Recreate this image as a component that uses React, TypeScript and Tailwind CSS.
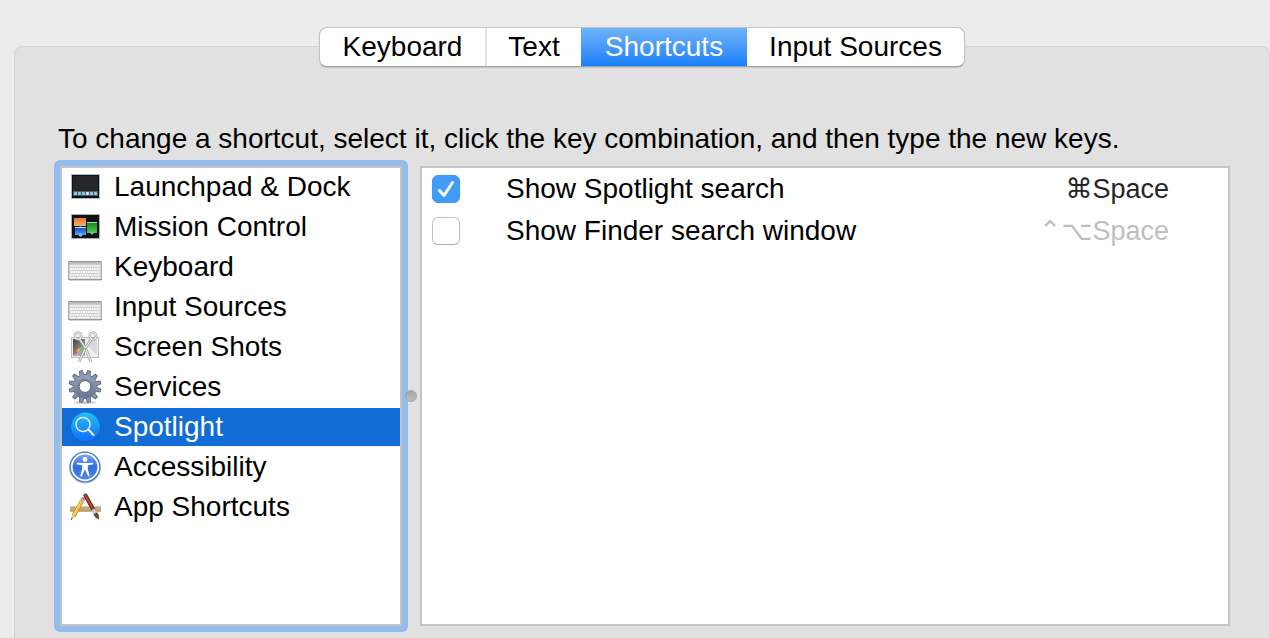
import { useState } from "react";
import type { ReactNode } from "react";

function LaunchpadIcon() {
  return (
    <svg viewBox="0 1 34 36" className="h-9 w-[34px] shrink-0" aria-hidden="true">
      <rect x="3" y="6" width="29" height="25" fill="#a9bcc2" />
      <rect x="4" y="7" width="27" height="23" fill="#0e0f10" />
      <rect x="5" y="8" width="25" height="15" fill="#252627" />
      <rect x="5" y="23" width="25" height="5" fill="#51616c" />
      <g fill="#93cdec">
        <rect x="6" y="24" width="3" height="3" rx="1" />
        <rect x="10" y="24" width="3" height="3" rx="1" />
        <rect x="14" y="24" width="3" height="3" rx="1" />
        <rect x="18" y="24" width="3" height="3" rx="1" fill="#e4eaf0" />
        <rect x="22" y="24" width="3" height="3" rx="1" />
        <rect x="26" y="24" width="3" height="3" rx="1" />
      </g>
    </svg>
  );
}

function MissionControlIcon() {
  return (
    <svg viewBox="0 1 34 36" className="h-9 w-[34px] shrink-0" aria-hidden="true">
      <defs>
        <linearGradient id="mc-orange" x2="0" y2="1"><stop stopColor="#e9762b" /><stop offset="1" stopColor="#f9b06d" /></linearGradient>
        <linearGradient id="mc-blue" x2="0" y2="1"><stop stopColor="#1c3fae" /><stop offset="1" stopColor="#52a9ff" /></linearGradient>
        <linearGradient id="mc-green" x2="0" y2="1"><stop stopColor="#14801f" /><stop offset="1" stopColor="#4fd044" /></linearGradient>
      </defs>
      <rect x="3" y="6" width="29" height="25" fill="#a4b2b5" />
      <rect x="4" y="7" width="27" height="23" fill="#111" />
      <rect x="6" y="10" width="12" height="8" fill="url(#mc-orange)" />
      <rect x="7" y="19" width="11" height="8" fill="url(#mc-blue)" />
      <path d="M7 19.500h11" stroke="#c8dcf7" />
      <rect x="19" y="14" width="10" height="11" fill="url(#mc-green)" />
      <path d="M19 14.500h10" stroke="#9ee49a" />
      <g fill="#5ec4fb">
        <circle cx="12.500" cy="17.500" r="1.300" />
        <circle cx="12.500" cy="27" r="1.800" />
        <circle cx="24" cy="25" r="1.500" />
      </g>
    </svg>
  );
}

function KeyboardIcon() {
  return (
    <svg viewBox="0 0 34 36" className="h-9 w-[34px] shrink-0" aria-hidden="true">
      <defs>
        <linearGradient id="kb-body" x2="0" y2="1"><stop stopColor="#a9a9a9" /><stop offset=".2" stopColor="#cfcfcf" /><stop offset="1" stopColor="#d5d5d5" /></linearGradient>
      </defs>
      <rect x="1" y="30" width="32" height="2" fill="#d3d3d3" />
      <rect x="0" y="12" width="34" height="19" rx="1" fill="url(#kb-body)" />
      <path d="M0 12.500h34M0 30.500h34" stroke="#979797" />
      <path d="M.5 12v18M33.500 12v18" stroke="#aaa" />
      <path d="M2 17h30" stroke="#f4f4f4" strokeWidth="2" strokeDasharray="1.6 .6" />
      <path d="M2 20h30" stroke="#fafafa" strokeWidth="2" strokeDasharray="1.7 .7" />
      <path d="M3 23h29" stroke="#fafafa" strokeWidth="2" strokeDasharray="1.7 .7" />
      <path d="M2 26h30" stroke="#f4f4f4" strokeWidth="2" strokeDasharray="1.7 .7" />
      <path d="M2 28.700h6M9 28.700h13M23 28.700h3M27 28.700h2M30 28.700h2" stroke="#f6f6f6" strokeWidth="1.500" />
    </svg>
  );
}

function ScreenShotsIcon() {
  return (
    <svg viewBox="0 0 34 36" className="h-9 w-[34px] shrink-0" aria-hidden="true">
      <defs>
        <linearGradient id="ss-photo" x2="1" y2="1"><stop stopColor="#444" /><stop offset="1" stopColor="#b7b7b7" /></linearGradient>
      </defs>
      <rect x="3" y="8" width="28" height="21" fill="#bcbcbc" />
      <rect x="4" y="9" width="26" height="19" fill="#f1f1f1" />
      <rect x="5" y="10" width="12" height="17" fill="url(#ss-photo)" />
      <path d="M5 26 13 21l4 2v4H5z" fill="#aaa" />
      <path d="M20 10h9v16l-9-9z" fill="#d9d9d9" />
      <path d="M6 24l3-2" stroke="#e65353" strokeWidth="2.500" />
      <path d="M9 22l3-2" stroke="#f1b64b" strokeWidth="2.500" />
      <path d="M12 20l3-2" stroke="#69c979" strokeWidth="2.500" />
      <g fill="none" stroke="#9a9a9a" strokeWidth="2.600">
        <circle cx="10" cy="7" r="3.200" />
        <circle cx="25" cy="7" r="3.200" />
        <path d="M11.500 10 18 20 23 33M23.500 10 17 20 11 33" />
      </g>
      <g fill="none" stroke="#eee" strokeWidth="1.300">
        <circle cx="10" cy="7" r="3.200" />
        <circle cx="25" cy="7" r="3.200" />
        <path d="M11.500 10 18 20 23 33M23.500 10 17 20 11 33" />
      </g>
      <circle cx="17.500" cy="20" r=".8" fill="#777" />
    </svg>
  );
}

const teeth = [15, 45, 75, 105, 135, 165, 195, 225, 255, 285, 315, 345];

function ServicesIcon() {
  return (
    <svg viewBox="0 0 34 36" className="h-9 w-[34px] shrink-0" aria-hidden="true">
      <defs>
        <linearGradient id="gear" gradientUnits="userSpaceOnUse" x1="17" y1="1" x2="17" y2="34"><stop stopColor="#a1adc4" /><stop offset=".5" stopColor="#7e8ba5" /><stop offset="1" stopColor="#5d6a83" /></linearGradient>
      </defs>
      <ellipse cx="17" cy="33.500" rx="11" ry="1.500" fill="#c8c8c8" />
      <g fill="#596275">
        {teeth.map((angle) => (
          <path key={angle} d="M14 8 15.200 1h3.600L20 8z" transform={`rotate(${angle} 17 17.500)`} />
        ))}
        <circle cx="17" cy="17.500" r="12.200" />
      </g>
      <g fill="#8794ae">
        {teeth.map((angle) => (
          <path key={angle} d="M14.800 8 15.900 1.800h2.200L19.200 8z" transform={`rotate(${angle} 17 17.500)`} />
        ))}
      </g>
      <circle cx="17" cy="17.500" r="11.600" fill="url(#gear)" />
      <circle cx="17" cy="17.500" r="7.300" fill="none" stroke="#76829b" />
      <circle cx="17" cy="17.500" r="5.900" fill="#fff" stroke="#525e74" />
    </svg>
  );
}

function SpotlightIcon() {
  return (
    <svg viewBox="0 0 34 36" className="h-9 w-[34px] shrink-0" aria-hidden="true">
      <defs>
        <linearGradient id="spot" x2="0" y2="1"><stop stopColor="#20c0fb" /><stop offset="1" stopColor="#126df9" /></linearGradient>
      </defs>
      <circle cx="17.500" cy="18.500" r="15" fill="#1260bd" />
      <circle cx="17.500" cy="18" r="14.500" fill="url(#spot)" />
      <g fill="none" stroke="#e9f2f6" strokeWidth="1.500" strokeLinecap="round">
        <circle cx="15" cy="15.500" r="7" />
        <path d="m20.300 20.500 5.200 5.500" strokeWidth="2" />
      </g>
    </svg>
  );
}

function AccessibilityIcon() {
  return (
    <svg viewBox="0 0 34 36" className="h-9 w-[34px] shrink-0" aria-hidden="true">
      <defs>
        <linearGradient id="access" x2="0" y2="1"><stop stopColor="#79aaf3" /><stop offset=".5" stopColor="#356be0" /><stop offset="1" stopColor="#4d8cf5" /></linearGradient>
      </defs>
      <circle cx="17" cy="18.500" r="16" fill="#c7cbd4" />
      <circle cx="17" cy="18" r="15.500" fill="#4b78cc" />
      <circle cx="17" cy="18" r="13.300" fill="url(#access)" stroke="#fff" strokeWidth="1.800" />
      <circle cx="17" cy="10.500" r="2.400" fill="#fff" />
      <path d="M9.500 13.800 15 14h4l5.500-.2c1 0 1 1.400 0 1.600l-4.700.8V20l1.800 6.500c.2 1-1.200 1.500-1.600.5L17.300 21h-.6L14 27c-.4 1-1.800.5-1.600-.5l1.800-6.500v-3.800l-4.700-.8c-1-.2-1-1.600 0-1.600z" fill="#fff" />
    </svg>
  );
}

function AppShortcutsIcon() {
  return (
    <svg viewBox="0 0 34 36" className="h-9 w-[34px] shrink-0" aria-hidden="true">
      <rect x="2" y="17" width="31" height="5.500" fill="#c9ab82" />
      <path d="M2 17.500h31" stroke="#dfc69c" />
      <path d="M2 22h31" stroke="#a98b62" />
      <path d="M14 12 5.500 27" stroke="#a67d22" strokeWidth="4" />
      <path d="M14 12 5.500 27" stroke="#f3bd38" strokeWidth="3" />
      <path d="M13.500 11.800 5 26.500" stroke="#ffe079" />
      <path d="m12.500 10.500 1-2c1-1.300 4-.2 3.500 1.500l-1 2.500z" fill="#d98395" />
      <path d="m12 11 3.700 2" stroke="#b9bec5" strokeWidth="1.500" />
      <path d="m4 26 3.400 2L3 31z" fill="#e8c898" />
      <path d="m3.300 29 1.400.8L3 31z" fill="#222" />
      <path d="M17.500 6.500 25.500 21" stroke="#601f17" strokeWidth="4" strokeLinecap="round" />
      <path d="M17.500 6.500 25.500 21" stroke="#ad4e3c" strokeWidth="2" strokeLinecap="round" />
      <path d="m25 20.500 2.200 4" stroke="#c4c9cc" strokeWidth="4" />
      <path d="m25.500 25.300 3.500-2c1.800 1.800 2.500 4.700 1.700 7.200-2-1-4.400-2.700-5.200-5.200z" fill="#674b31" />
    </svg>
  );
}

type Category = { name: string; icon: ReactNode };

const categories: Category[] = [
  { name: "Launchpad & Dock", icon: <LaunchpadIcon /> },
  { name: "Mission Control", icon: <MissionControlIcon /> },
  { name: "Keyboard", icon: <KeyboardIcon /> },
  { name: "Input Sources", icon: <KeyboardIcon /> },
  { name: "Screen Shots", icon: <ScreenShotsIcon /> },
  { name: "Services", icon: <ServicesIcon /> },
  { name: "Spotlight", icon: <SpotlightIcon /> },
  { name: "Accessibility", icon: <AccessibilityIcon /> },
  { name: "App Shortcuts", icon: <AppShortcutsIcon /> },
];

const tabs = [
  { name: "Keyboard", width: "w-[165px]" },
  { name: "Text", width: "w-[96px]" },
  { name: "Shortcuts", width: "w-[166px]" },
  { name: "Input Sources", width: "w-[217px]" },
];

const shortcuts = [
  { id: "spotlight-search", label: "Show Spotlight search", keys: "⌘Space" },
  { id: "finder-search", label: "Show Finder search window", keys: "⌃⌥Space" },
];

export default function App() {
  const [tab, setTab] = useState("Shortcuts");
  const [selected, setSelected] = useState("Spotlight");
  const [enabled, setEnabled] = useState([true, false]);

  return (
    <main className="flex min-h-screen flex-col bg-[#ececec] pt-[27px] pl-[14px] font-['Liberation_Sans',Arial,sans-serif] text-[28px] leading-8 text-black">
      <div role="tablist" className="z-10 flex h-10 self-center overflow-hidden rounded-lg border border-[#c2c2c2] border-b-[#a3a3a3] bg-white shadow-[0_1px_1px_#0002]">
        {tabs.map(({ name, width }) => (
          <button
            key={name}
            type="button"
            role="tab"
            aria-selected={tab === name}
            onClick={() => setTab(name)}
            className={`${width} ${name === "Text" ? "border-l-2 border-[#e2e2e2]" : ""} ${
              tab === name ? "bg-linear-to-b from-[#6db3f8] to-[#157efb] text-white" : ""
            }`}
          >
            {name}
          </button>
        ))}
      </div>

      <section className="-mt-[21px] flex grow flex-col rounded-t-lg border border-b-0 border-[#d6d6d6] bg-[#e1e1e1] pt-[76px] pr-[39px] pb-[6px] pl-[39px]">
        <p className="pl-1">To change a shortcut, select it, click the key combination, and then type the new keys.</p>

        <div className="mt-[5px] flex grow">
          <div className="flex w-[354px] shrink-0 rounded-md bg-[#93bdec] p-[6px]">
            <ul className="flex grow flex-col gap-[2px] border-2 border-[#c4c4c4] bg-white">
              {categories.map(({ name, icon }) => (
                <li key={name}>
                  <button
                    type="button"
                    aria-pressed={selected === name}
                    onClick={() => setSelected(name)}
                    className={`flex h-[38px] w-full items-center gap-3 pl-[6px] text-left ${
                      selected === name ? "bg-[#116cd6] text-white" : ""
                    }`}
                  >
                    {icon}
                    {name}
                  </button>
                </li>
              ))}
            </ul>
          </div>

          <div className="z-10 -ml-[6px] flex w-[18px] shrink-0 items-center justify-center">
            <span className="size-3 rounded-full border border-[#a3a3a3] bg-linear-to-b from-[#a6a6a6] to-[#bababa]" />
          </div>

          <div className="my-[6px] grow border-2 border-[#c4c4c4] bg-white">
            <table className="w-full border-collapse">
              <tbody>
                {shortcuts.map(({ id, label, keys }, index) => (
                  <tr key={id} className="h-[42px]">
                    <td className="w-[84px] p-0 pl-[10px]">
                      <span className="grid size-7">
                        <input
                          id={id}
                          type="checkbox"
                          checked={enabled[index]}
                          onChange={() => setEnabled(enabled.map((on, i) => (i === index ? !on : on)))}
                          className="col-start-1 row-start-1 size-7 appearance-none rounded-md border border-[#bdbdbd] border-b-[#aaa] bg-white checked:border-[#3b99fc] checked:bg-[#409bf9]"
                        />
                        {enabled[index] && (
                          <svg viewBox="0 0 28 28" className="pointer-events-none col-start-1 row-start-1 size-7" aria-hidden="true">
                            <path d="m7.500 15.500 4.500 5L20.500 7.500" fill="none" stroke="#fff" strokeWidth="3" strokeLinecap="round" strokeLinejoin="round" />
                          </svg>
                        )}
                      </span>
                    </td>
                    <td className="p-0">
                      <label htmlFor={id}>{label}</label>
                    </td>
                    <td className={`p-0 pr-[59px] text-right text-[27px] ${enabled[index] ? "text-[#262626]" : "text-[#bfbfbf]"}`}>
                      <kbd className="font-['Liberation_Sans','DejaVu_Sans',sans-serif]">{keys}</kbd>
                    </td>
                  </tr>
                ))}
              </tbody>
            </table>
          </div>
        </div>
      </section>
    </main>
  );
}
